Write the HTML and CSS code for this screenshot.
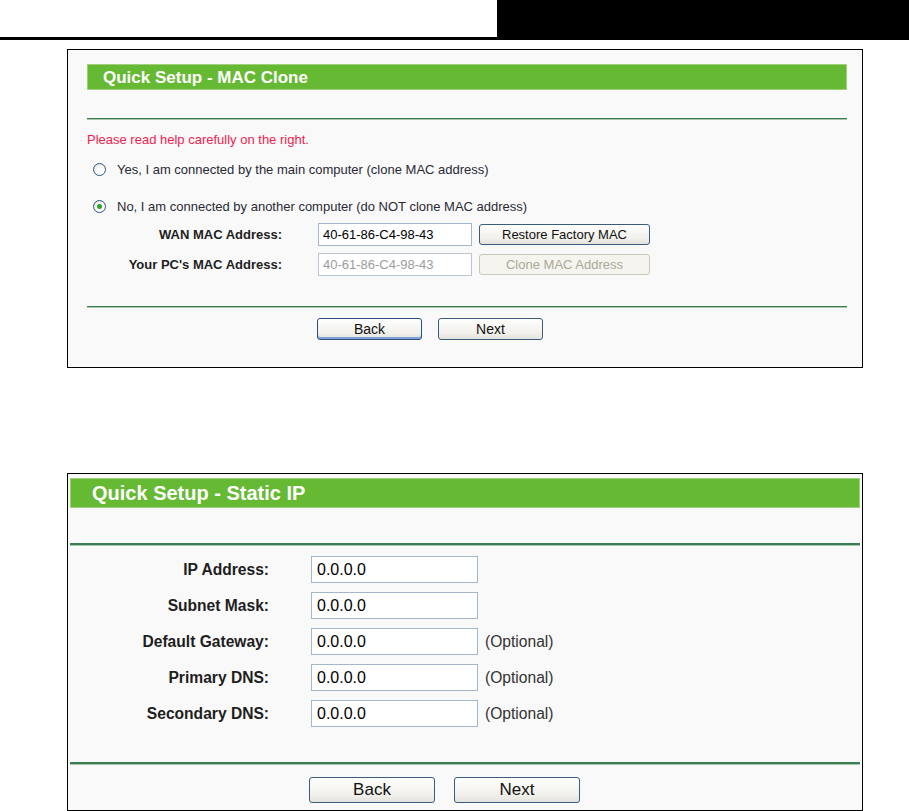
FILE: index.html
```html
<!DOCTYPE html>
<html lang="en">
<head>
    <meta charset="UTF-8">
    <title>Quick Setup</title>
    <meta name="viewport" content="width=device-width, initial-scale=1">
    <link rel="stylesheet" href="styles.css">
</head>
<body>
    <div class="page-top">
        <div class="page-top-tab"></div>
    </div>

    <div class="panel panel-mac">
        <div class="panel-head">Quick Setup - MAC Clone</div>
        <div class="rule"></div>
        <div class="note">Please read help carefully on the right.</div>
        <div class="choice choice-first"><span class="radio"></span>Yes, I am connected by the main computer (clone MAC address)</div>
        <div class="choice choice-second"><span class="radio checked"></span>No, I am connected by another computer (do NOT clone MAC address)</div>
        <div class="fields">
            <div class="field-label">WAN MAC Address:</div>
            <input class="field-input" type="text" value="40-61-86-C4-98-43">
            <button class="btn btn-wide" type="button">Restore Factory MAC</button>
            <div class="field-label">Your PC's MAC Address:</div>
            <input class="field-input" type="text" value="40-61-86-C4-98-43" disabled>
            <button class="btn btn-wide" type="button" disabled>Clone MAC Address</button>
        </div>
        <div class="rule rule-bottom"></div>
        <div class="actions">
            <button class="btn btn-nav btn-default" type="button">Back</button>
            <button class="btn btn-nav" type="button">Next</button>
        </div>
    </div>

    <div class="panel panel-ip">
        <div class="panel-head">Quick Setup - Static IP</div>
        <div class="rule"></div>
        <div class="fields">
            <div class="field-label">IP Address:</div>
            <input class="field-input" type="text" value="0.0.0.0">
            <div></div>
            <div class="field-label">Subnet Mask:</div>
            <input class="field-input" type="text" value="0.0.0.0">
            <div></div>
            <div class="field-label">Default Gateway:</div>
            <input class="field-input" type="text" value="0.0.0.0">
            <div class="hint">(Optional)</div>
            <div class="field-label">Primary DNS:</div>
            <input class="field-input" type="text" value="0.0.0.0">
            <div class="hint">(Optional)</div>
            <div class="field-label">Secondary DNS:</div>
            <input class="field-input" type="text" value="0.0.0.0">
            <div class="hint">(Optional)</div>
        </div>
        <div class="rule rule-bottom"></div>
        <div class="actions">
            <button class="btn btn-nav" type="button">Back</button>
            <button class="btn btn-nav" type="button">Next</button>
        </div>
    </div>
</body>
</html>
```

FILE: styles.css
```css
body {
    font-family: 'Liberation Sans', Arial, sans-serif;
    background: #fff;
    color: #222;
    margin: 0;
    padding: 0;
}
.page-top {
    display: flex;
    justify-content: flex-end;
    height: 37px;
    border-bottom: 3px solid #000;
}
.page-top-tab {
    width: 412px;
    background: #000;
}

/* panels */
.panel {
    box-sizing: border-box;
    width: 796px;
    margin-left: 67px;
    border: 1px solid #000;
    background: #f9f9f9;
}
.panel-head {
    background: #66b933;
    color: #fff;
    font-weight: bold;
    box-shadow: inset 0 0 0 1px #9fd17a;
}
.rule {
    border-top: 1px solid #3b7d52;
    border-bottom: 1px solid #a7c6b0;
}

.panel-mac {
    margin-top: 9px;
    padding: 14px 15px 27px 19px;
    font-size: 13px;
}
.panel-mac .panel-head {
    height: 26px;
    line-height: 27px;
    font-size: 17px;
    padding-left: 16px;
}
.panel-mac .rule {
    margin-top: 28px;
}
.panel-mac .rule-bottom {
    margin-top: 30px;
}

.note {
    color: #f0234f;
    line-height: 16px;
    margin-top: 12px;
}
.choice {
    display: flex;
    align-items: center;
    height: 18px;
    color: #2a2a35;
}
.choice-first {
    margin-top: 12px;
}
.choice-second {
    margin-top: 19px;
}
.radio {
    box-sizing: border-box;
    width: 13px;
    height: 13px;
    margin: 0 11px 0 6px;
    border: 1px solid #2f5579;
    border-radius: 50%;
    background: radial-gradient(circle at 65% 70%, #fff 30%, #dcdcd6 100%);
    display: flex;
    align-items: center;
    justify-content: center;
}
.radio.checked::after {
    content: "";
    width: 5px;
    height: 5px;
    border-radius: 50%;
    background: #2ba52b;
}

.fields {
    display: grid;
    align-items: center;
}
.panel-mac .fields {
    grid-template-columns: 195px 154px 171px;
    column-gap: 36px;
    row-gap: 7px;
    margin-top: 8px;
}
.panel-mac .fields .btn {
    margin-left: -29px;
}
.field-label {
    font-weight: bold;
    text-align: right;
    color: #1e1e1e;
}
.field-input {
    box-sizing: border-box;
    height: 23px;
    padding: 0 4px;
    border: 1px solid #a3b6cc;
    background: #fff;
    font-family: inherit;
    font-size: 13px;
    color: #000;
}
.field-input:disabled {
    border-color: #bcc6d2;
    color: #9c9c9c;
    background: #fff;
}

.btn {
    box-sizing: border-box;
    height: 21px;
    padding: 0;
    border: 1px solid #3d5b7d;
    border-radius: 3px;
    background: linear-gradient(#fefefd, #f1f0eb 70%, #e3e2dc);
    font-family: inherit;
    font-size: 13px;
    color: #111;
}
.btn-wide {
    width: 171px;
}
.btn:disabled {
    border-color: #cac8bb;
    background: #f5f4ee;
    color: #aca899;
}
.btn-default {
    border-color: #2d4f7c;
    box-shadow: inset 0 -2px 0 #7fa3d6;
}

.actions {
    display: flex;
}
.panel-mac .actions {
    margin: 10px 0 0 230px;
    gap: 16px;
}
.panel-mac .btn-nav {
    width: 105px;
    height: 22px;
    font-size: 14px;
}

/* larger static ip panel */
.panel-ip {
    margin-top: 105px;
    padding: 4px 2px 7px 2px;
    font-size: 15.6px;
}
.panel-ip .panel-head {
    height: 30px;
    line-height: 31px;
    font-size: 20px;
    padding-left: 22px;
}
.panel-ip .rule {
    margin-top: 35px;
    border-top-width: 2px;
}
.panel-ip .rule-bottom {
    margin-top: 35px;
}
.panel-ip .fields {
    grid-template-columns: 199px 167px auto;
    column-gap: 42px;
    row-gap: 9px;
    margin-top: 10px;
}
.panel-ip .hint {
    margin-left: -35px;
    color: #333;
}
.panel-ip .field-input {
    height: 27px;
    font-size: 16px;
    padding: 0 5px;
}
.panel-ip .actions {
    margin: 12px 0 0 239px;
    gap: 19px;
}
.panel-ip .btn-nav {
    width: 126px;
    height: 26px;
    font-size: 17px;
}
```
